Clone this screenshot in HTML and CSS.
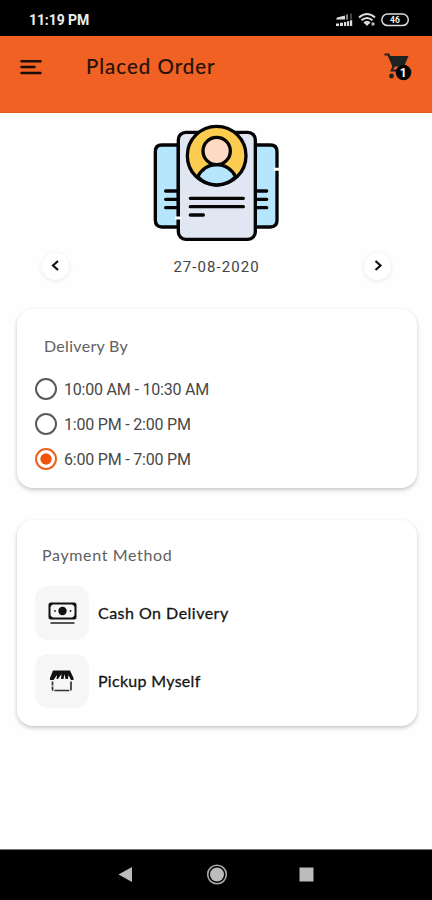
FILE: index.html
```html
<!DOCTYPE html>
<html lang="en">
<head>
<meta charset="utf-8">
<title>Placed Order</title>
<link rel="stylesheet" href="styles.css">
</head>
<body>
<div class="status">
  <span class="clock">11:19 PM</span>
  <svg class="status-icons" width="78" height="20" viewBox="0 0 78 20">
    <g fill="#ddd">
      <path d="M1 9.500L2 7.500L10 5.500V9.500Z"/><path d="M11 4.500h2v5h-2z" fill="#888"/><path d="M15 3.500h2v6h-2z" fill="#444"/>
      <path d="M1 13.500h3V16H1zM5 12.800h3V16H5zM9 12h2.200v4H9zM12 11.200h2.200V16H12zM15 10.300h2.200V16H15z"/>
    </g>
    <g fill="none" stroke="#ddd" stroke-width="1.900">
      <path d="M24 7.500Q32 .5 40 7.500M26.500 10.300Q32 5.500 37.500 10.300M29 13Q32 10.500 35 13"/>
    </g>
    <path d="M29.500 13.200L32 16l2.500-2.800q-2.500-1.500-5 0z" fill="#ddd"/>
    <circle cx="38" cy="14" r="1.700" fill="#bbb"/>
    <rect x="46.800" y="4" width="26.500" height="11.600" rx="5.800" fill="none" stroke="#ddd" stroke-width="1.500"/>
    <text class="battery" x="60" y="13" text-anchor="middle">46</text>
  </svg>
</div>
<header class="bar">
  <svg class="menu" width="24" height="18" viewBox="0 0 24 18"><path d="M2.500 3.200H21.500M2.500 9H15.500M2.500 15H21.500" stroke="#1a0e08" stroke-width="2.500" stroke-linecap="round"/></svg>
  <h1>Placed Order</h1>
  <svg class="cart" width="32" height="32" viewBox="0 0 32 32">
    <path d="M1.500 3.500H5.500L11 16.500" fill="none" stroke="#1c2321" stroke-width="2.200"/>
    <path d="M6 5H25.500L21 15.500H10.500z" fill="#1c2321"/>
    <path d="M10.500 15.500L8.500 19.500H15" fill="none" stroke="#1c2321" stroke-width="1.800"/>
    <circle cx="8.500" cy="25" r="2.400" fill="#1c2321"/>
    <circle cx="20.500" cy="21.500" r="7.800" fill="#050505"/>
    <text class="badge" x="20.300" y="25.800" text-anchor="middle">1</text>
  </svg>
</header>
<main>
  <svg class="hero" width="150" height="135" viewBox="0 0 450 405">
    <g stroke="#050505" stroke-width="10" stroke-linecap="round" stroke-linejoin="round">
      <path d="M115 90H65Q46 90 46 110V316Q46 336 66 336H115z" fill="#b5e6fd"/>
      <path d="M346 90H391Q411 90 411 110V316Q411 336 391 336H346z" fill="#b5e6fd"/>
      <path d="M77 228H112M77 253H112M77 278H112M349 228H380M349 253H380M349 278H380"/>
      <rect x="115" y="52" width="231" height="321" rx="22" fill="#e0e7f3"/>
      <circle cx="230" cy="122" r="88" fill="#fbcc50"/>
      <path d="M173 185Q193 149 230 149T287 185Q263 210 230 210T173 185z" fill="#b5e6fd"/>
      <circle cx="230" cy="108" r="41" fill="#ffdac2"/>
      <path d="M151 250H310M151 275H310M151 300H190"/>
    </g>
    <path d="M401 163H421M105 309H123" stroke="#fff" stroke-width="9"/>
  </svg>
  <div class="date">
    <span class="round"><svg width="26" height="26" viewBox="0 0 26 26"><path d="M15 8L10 12.500L15 17"/></svg></span>
    <span class="day">27-08-2020</span>
    <span class="round"><svg width="26" height="26" viewBox="0 0 26 26"><path d="M11.500 8L16.500 12.500L11.500 17"/></svg></span>
  </div>
  <section class="card delivery">
    <h2>Delivery By</h2>
    <div class="slot"><i class="radio"></i><span>10:00 AM - 10:30 AM</span></div>
    <div class="slot"><i class="radio"></i><span>1:00 PM - 2:00 PM</span></div>
    <div class="slot"><i class="radio on"></i><span>6:00 PM - 7:00 PM</span></div>
  </section>
  <section class="card payment">
    <h2>Payment Method</h2>
    <div class="method">
      <span class="tile"><svg width="32" height="28" viewBox="0 0 32 28">
        <rect x="3.500" y="4.500" width="26" height="15" rx="1.500" fill="none" stroke="#111" stroke-width="2"/>
        <path d="M3.500 8.500L7.500 4.500h-4zM29.500 8.500L25.500 4.500h4zM3.500 15.500l4 4h-4zM29.500 15.500l-4 4h4z" fill="#111"/>
        <circle cx="16.500" cy="12" r="4.200" fill="#111"/><circle cx="9" cy="12" r="1" fill="#333"/><circle cx="24.500" cy="12" r="1" fill="#333"/>
        <path d="M4.500 24H28.500" stroke="#555" stroke-width="2"/>
      </svg></span>
      <span class="cash">Cash On Delivery</span>
    </div>
    <div class="method">
      <span class="tile"><svg width="32" height="28" viewBox="0 0 32 28">
        <path d="M7 3.500H24L27.500 11V13H25L22.500 8L22 12H19.500L18.500 7L17.500 12H15L15.500 7L12 12H10.500L11 8L7.500 13H4V11z" fill="#111"/>
        <path d="M6.500 14.500V22Q6.500 23.500 8 23.500H23.500Q25 23.500 25 22V14.500" fill="none" stroke="#333" stroke-width="1.700" stroke-dasharray="4 1 4 1 15 1 9"/>
      </svg></span>
      <span class="pickup">Pickup Myself</span>
    </div>
  </section>
</main>
<nav class="nav">
  <svg width="432" height="50" viewBox="0 0 432 50">
    <path d="M118.500 24.500L132 17V32z" fill="#bcbcbc"/>
    <circle cx="217" cy="24.500" r="9.300" fill="none" stroke="#aaa" stroke-width="1.600"/>
    <circle cx="217" cy="24.500" r="7" fill="#bcbcbc"/>
    <rect x="299.500" y="17.500" width="14" height="14" fill="#bcbcbc"/>
  </svg>
</nav>
</body>
</html>
```
FILE: styles.css
```css
* { box-sizing: border-box; }
body {
  margin: 0;
  width: 432px;
  height: 900px;
  display: flex;
  flex-direction: column;
  overflow: hidden;
  background: #fefefe;
  font-family: Roboto, sans-serif;
}
svg { display: block; }
.status {
  height: 36px;
  padding: 4px 19px 0 29px;
  display: flex;
  align-items: center;
  justify-content: space-between;
  background: #000;
}
.clock { color: #eee; font-size: 14px; font-weight: 700; letter-spacing: -.1px; }
.battery { font: 700 8.500px Roboto, sans-serif; fill: #eee; }
.bar {
  height: 77px;
  padding: 15px 17px 0 18px;
  display: flex;
  align-items: flex-start;
  background: #f26124;
  border-bottom: 1px solid #e45c20;
}
.menu { margin: 7px 0 0 1px; }
h1 {
  margin: 3px auto 0 43px;
  font: 400 20.500px/24px Lato, sans-serif;
  letter-spacing: 1px;
  color: #24110a;
  -webkit-text-stroke: .2px #24110a;
}
.badge { font: 700 12px Roboto, sans-serif; fill: #fff; }
main { flex: 1; padding: 2px 15px 0 17px; }
.hero { margin-left: 123px; }
.date {
  height: 32px;
  padding: 0 26px 0 25px;
  display: flex;
  align-items: center;
  justify-content: space-between;
}
.round {
  width: 27px;
  height: 27px;
  display: grid;
  place-items: center;
  border-radius: 50%;
  background: #fff;
  box-shadow: 0 1px 5px rgba(0,0,0,.09);
}
.round path { fill: none; stroke: #111; stroke-width: 2.200; }
.day { padding-top: 1px; font-size: 15px; letter-spacing: 1.050px; color: #444; }
.card { background: #fff; border-radius: 16px; box-shadow: 0 2px 4px rgba(0,0,0,.22); }
.delivery { height: 179px; margin-top: 27px; padding: 26px 18px 0; }
.payment { height: 206px; margin-top: 32px; padding: 24px 18px 0; }
h2 {
  margin: 0;
  font: 400 16px/22px Lato, sans-serif;
  color: #606060;
}
.delivery h2 { padding-left: 9px; margin-bottom: 14px; letter-spacing: .3px; }
.payment h2 { padding-left: 7px; margin-bottom: 20px; letter-spacing: .65px; }
.slot { height: 35.300px; display: flex; align-items: center; gap: 7px; font-size: 16px; letter-spacing: -.2px; color: #484848; }
.slot span { padding-top: 1px; }
.radio {
  width: 22px;
  height: 22px;
  border: 2px solid #5a5a5a;
  border-radius: 50%;
}
.radio.on { border-color: #ed611f; background: radial-gradient(circle, #f0530a 5.200px, #fff 6px); }
.method {
  display: flex;
  align-items: center;
  gap: 9px;
  margin-bottom: 14px;
  font: 400 16px/22px Lato, sans-serif;
  color: #151515;
  -webkit-text-stroke: .3px #151515;
}
.cash { letter-spacing: .48px; }
.pickup { letter-spacing: .3px; }
.tile {
  width: 54px;
  height: 54px;
  display: grid;
  place-items: center;
  border-radius: 13px;
  background: #f6f6f6;
}
.nav { height: 51px; background: #000; border-top: 1px solid #777; }
```
